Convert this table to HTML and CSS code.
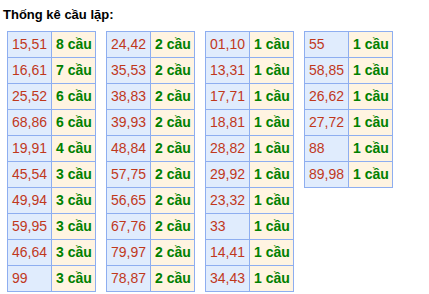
FILE: index.html
```html
<!DOCTYPE html>
<html>
<head>
<meta charset="utf-8">
<link rel="stylesheet" href="styles.css">
</head>
<body>
<div class="title">Thống kê cầu lặp:</div>
<div class="tables">
  <table class="tk">
    <tr><td class="so">15,51</td><td class="cau">8 cầu</td></tr>
    <tr><td class="so">16,61</td><td class="cau">7 cầu</td></tr>
    <tr><td class="so">25,52</td><td class="cau">6 cầu</td></tr>
    <tr><td class="so">68,86</td><td class="cau">6 cầu</td></tr>
    <tr><td class="so">19,91</td><td class="cau">4 cầu</td></tr>
    <tr><td class="so">45,54</td><td class="cau">3 cầu</td></tr>
    <tr><td class="so">49,94</td><td class="cau">3 cầu</td></tr>
    <tr><td class="so">59,95</td><td class="cau">3 cầu</td></tr>
    <tr><td class="so">46,64</td><td class="cau">3 cầu</td></tr>
    <tr><td class="so">99</td><td class="cau">3 cầu</td></tr>
  </table>
  <table class="tk">
    <tr><td class="so">24,42</td><td class="cau">2 cầu</td></tr>
    <tr><td class="so">35,53</td><td class="cau">2 cầu</td></tr>
    <tr><td class="so">38,83</td><td class="cau">2 cầu</td></tr>
    <tr><td class="so">39,93</td><td class="cau">2 cầu</td></tr>
    <tr><td class="so">48,84</td><td class="cau">2 cầu</td></tr>
    <tr><td class="so">57,75</td><td class="cau">2 cầu</td></tr>
    <tr><td class="so">56,65</td><td class="cau">2 cầu</td></tr>
    <tr><td class="so">67,76</td><td class="cau">2 cầu</td></tr>
    <tr><td class="so">79,97</td><td class="cau">2 cầu</td></tr>
    <tr><td class="so">78,87</td><td class="cau">2 cầu</td></tr>
  </table>
  <table class="tk">
    <tr><td class="so">01,10</td><td class="cau">1 cầu</td></tr>
    <tr><td class="so">13,31</td><td class="cau">1 cầu</td></tr>
    <tr><td class="so">17,71</td><td class="cau">1 cầu</td></tr>
    <tr><td class="so">18,81</td><td class="cau">1 cầu</td></tr>
    <tr><td class="so">28,82</td><td class="cau">1 cầu</td></tr>
    <tr><td class="so">29,92</td><td class="cau">1 cầu</td></tr>
    <tr><td class="so">23,32</td><td class="cau">1 cầu</td></tr>
    <tr><td class="so">33</td><td class="cau">1 cầu</td></tr>
    <tr><td class="so">14,41</td><td class="cau">1 cầu</td></tr>
    <tr><td class="so">34,43</td><td class="cau">1 cầu</td></tr>
  </table>
  <table class="tk">
    <tr><td class="so">55</td><td class="cau">1 cầu</td></tr>
    <tr><td class="so">58,85</td><td class="cau">1 cầu</td></tr>
    <tr><td class="so">26,62</td><td class="cau">1 cầu</td></tr>
    <tr><td class="so">27,72</td><td class="cau">1 cầu</td></tr>
    <tr><td class="so">88</td><td class="cau">1 cầu</td></tr>
    <tr><td class="so">89,98</td><td class="cau">1 cầu</td></tr>
  </table>
</div>
</body>
</html>
```
FILE: styles.css
```css
html, body {
  margin: 0;
  padding: 0;
  background: #ffffff;
  font-family: "Liberation Sans", Arial, sans-serif;
}

.title {
  margin: 7px 0 0 3px;
  font-size: 13px;
  line-height: 16px;
  font-weight: bold;
  color: #000;
}

.tables {
  display: flex;
  align-items: flex-start;
  gap: 10px;
  margin-top: 8px;
  padding-left: 7px;
}

.tk {
  border-collapse: separate;
  border-spacing: 0;
  border-left: 1px solid #8eaef0;
  border-top: 1px solid #8eaef0;
}

.tk td {
  box-sizing: border-box;
  width: 44px;
  height: 26px;
  padding: 0 0 1px 4px;
  border-right: 1px solid #8eaef0;
  border-bottom: 1px solid #8eaef0;
  font-size: 14px;
  line-height: 16px;
  vertical-align: middle;
  white-space: nowrap;
}

.tk td.so {
  background: #e0ecfd;
  color: #c0381c;
}

.tk td.cau {
  background: #fff4e1;
  color: #008000;
  font-weight: bold;
}
```
